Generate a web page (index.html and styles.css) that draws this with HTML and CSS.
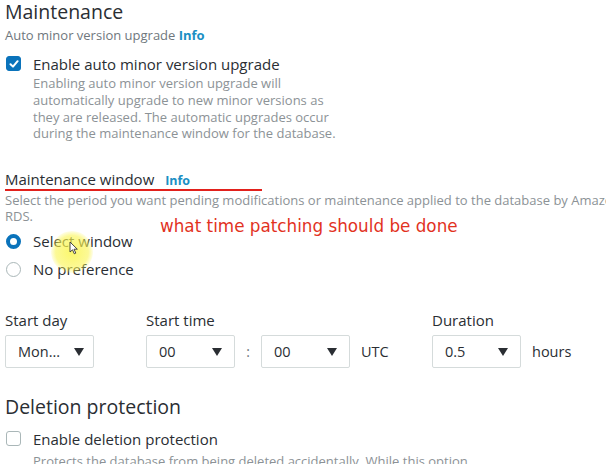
FILE: index.html
```html
<!DOCTYPE html>
<html>
<head>
<meta charset="utf-8">
<link rel="stylesheet" href="styles.css">
</head>
<body>
<div class="page">
  <section class="sec maint">
    <h2 class="h2">Maintenance</h2>
    <div class="sub">Auto minor version upgrade <span class="info">Info</span></div>
    <div class="check-row">
      <span class="cb checked"><svg width="10" height="10" viewBox="0 0 10 10"><path d="M1.5 5.2 L4 7.6 L8.6 2.2" fill="none" stroke="#fff" stroke-width="2" stroke-linecap="round" stroke-linejoin="round"/></svg></span>
      <div class="check-text">
        <div class="check-label">Enable auto minor version upgrade</div>
        <div class="desc">Enabling auto minor version upgrade will<br>automatically upgrade to new minor versions as<br>they are released. The automatic upgrades occur<br>during the maintenance window for the database.</div>
      </div>
    </div>
  </section>

  <section class="sec window">
    <div class="win-head">Maintenance window <span class="info">Info</span></div>
    <div class="desc wide">Select the period you want pending modifications or maintenance applied to the database by Amazon<br>RDS.</div>
    <div class="radios">
      <div class="radio-row"><span class="rb on"></span><span class="radio-label">Select window</span></div>
      <div class="radio-row"><span class="rb"></span><span class="radio-label">No preference</span></div>
      <div class="note">what time patching should be done</div>
      <div class="spot"></div>
      <svg class="cursor" width="10" height="14" viewBox="0 0 10 14"><path d="M1 1 L1 11 L3.5 8.8 L5.3 12.8 L6.8 12.1 L5 8.2 L8.3 8.2 Z" fill="#fff" stroke="#333" stroke-width="0.9" stroke-linejoin="round"/></svg>
    </div>

    <div class="fields">
      <div class="field f-day">
        <div class="flabel">Start day</div>
        <div class="sel sel-day"><span>Mon...</span><span class="arrow"></span></div>
      </div>
      <div class="field f-time">
        <div class="flabel">Start time</div>
        <div class="inline">
          <div class="sel"><span>00</span><span class="arrow"></span></div>
          <span class="colon">:</span>
          <div class="sel"><span>00</span><span class="arrow"></span></div>
          <span class="unit">UTC</span>
        </div>
      </div>
      <div class="field f-dur">
        <div class="flabel">Duration</div>
        <div class="inline">
          <div class="sel"><span>0.5</span><span class="arrow"></span></div>
          <span class="unit">hours</span>
        </div>
      </div>
    </div>
  </section>

  <section class="sec del">
    <h2 class="h2">Deletion protection</h2>
    <div class="check-row">
      <span class="cb"></span>
      <div class="check-text">
        <div class="check-label">Enable deletion protection</div>
        <div class="desc">Protects the database from being deleted accidentally. While this option</div>
      </div>
    </div>
  </section>
</div>
</body>
</html>
```

FILE: styles.css
```css
* { box-sizing: border-box; }
html, body { margin: 0; padding: 0; background: #fff; }
body {
  width: 606px; height: 464px; overflow: hidden;
  font-family: "Open Sans", "Noto Sans", sans-serif;
  color: #2a2e33;
}
.page { padding: 0 0 0 5px; overflow: hidden; }
.h2 { margin: 0; font-weight: 400; font-size: 19.5px; line-height: 24px; color: #2a2e33; }
.sub { font-size: 13px; line-height: 16px; color: #6f777d; margin-top: 3px; }
.info { color: #1a8fc4; font-weight: 700; }
.check-row { display: flex; gap: 12px; margin-top: 11px; margin-left: 1px; }
.cb {
  flex: none; width: 15px; height: 15px; border-radius: 3px; margin-top: 2px;
  border: 1.5px solid #aab7b8; background: #fff;
  display: flex; align-items: center; justify-content: center;
}
.cb.checked { background: #0a73bb; border-color: #0a73bb; }
.check-label { font-size: 15px; line-height: 20px; color: #2a2e33; }
.desc { font-size: 13px; line-height: 16.8px; color: #8c9296; margin-top: 1px; }
.window { margin-top: 29px; }
.win-head {
  width: 257px; font-size: 15px; line-height: 16px; color: #2a2e33;
  border-bottom: 2px solid #e2211c; padding-bottom: 0;
}
.win-head .info { font-size: 12.5px; margin-left: 7px; }
.desc.wide { font-size: 13px; line-height: 16px; margin-top: 1px; width: 640px; }
.radios { position: relative; margin-top: 3px; }
.radio-row { display: flex; align-items: center; gap: 12px; height: 28px; margin-left: 1px; }
.rb {
  flex: none; width: 15px; height: 15px; border-radius: 50%;
  border: 1.5px solid #aab7b8; background: #fff;
}
.rb.on { border: 4.5px solid #0a73bb; }
.radio-label { font-size: 15px; color: #2a2e33; }
.note {
  position: absolute; left: 155px; top: -11px;
  font-family: "DejaVu Sans", sans-serif; font-size: 16.8px; color: #e2321e;
}
.spot {
  position: absolute; left: 46px; top: 4px; width: 42px; height: 42px; border-radius: 50%;
  background: radial-gradient(circle, rgba(250,245,70,0.8) 0%, rgba(250,245,80,0.6) 55%, rgba(255,255,120,0) 75%);
}
.cursor { position: absolute; left: 64px; top: 14px; }
.fields { display: flex; margin-top: 28px; }
.flabel { font-size: 15px; line-height: 18px; color: #2a2e33; margin-bottom: 6px; }
.field.f-day { width: 141px; }
.field.f-time { width: 286px; }
.inline { display: flex; align-items: center; }
.sel {
  width: 89px; height: 33px; border: 1px solid #d5dbdb; border-radius: 2px;
  display: flex; align-items: center; justify-content: space-between;
  padding: 0 12px 0 12px; font-size: 14.5px; color: #2a2e33;
}
.sel-day { padding-right: 9px; }
.arrow {
  width: 0; height: 0; border-left: 5.5px solid transparent; border-right: 5.5px solid transparent;
  border-top: 8px solid #2a2e33; margin-top: 1px;
}
.colon { width: 26px; text-align: center; font-size: 14px; color: #6f777d; }
.unit { margin-left: 11px; font-size: 14.5px; color: #2a2e33; }
.del { margin-top: 27px; }
.del .check-row { margin-top: 10px; }
.del .desc { margin-top: 4px; }
```
